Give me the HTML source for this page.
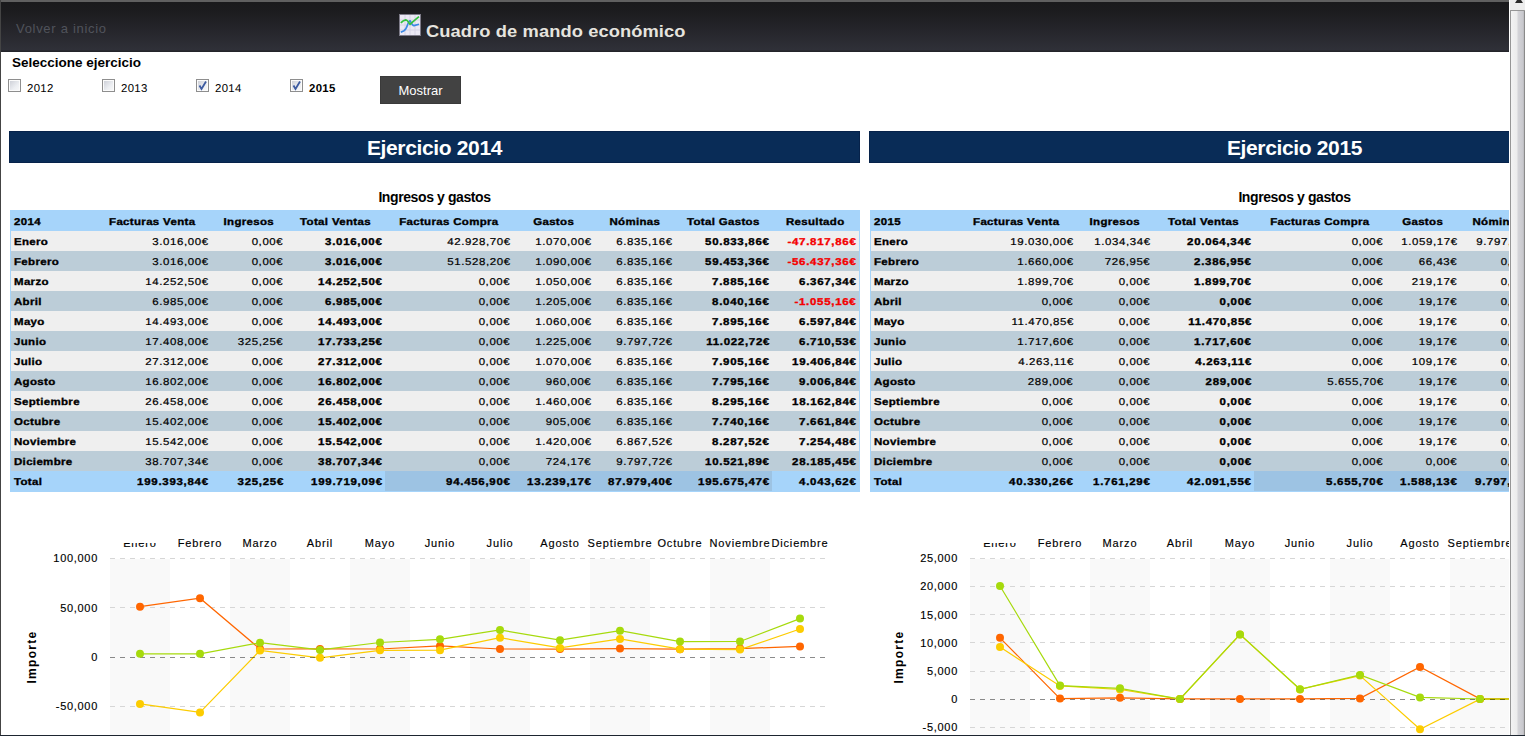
<!DOCTYPE html>
<html><head><meta charset="utf-8"><style>
*{margin:0;padding:0;box-sizing:border-box}
html,body{width:1525px;height:736px;overflow:hidden;background:#fff;font-family:"Liberation Sans", sans-serif;}
#page{position:absolute;left:0;top:0;width:1509px;height:736px;overflow:hidden;background:#fff}
.frameT{position:absolute;left:0;top:0;width:1509px;height:2px;background:#606060}
.frameL{position:absolute;left:0;top:0;width:1px;height:736px;background:#444}
.frameB{position:absolute;left:0;top:735px;width:1525px;height:1px;background:#1d2530}
#hdr{position:absolute;left:1px;top:2px;width:1508px;height:50px;background:linear-gradient(#1a1a1c 0%,#1c1c1f 20%,#2f3038 96%,#23242a 98%)}
.volver{position:absolute;left:15px;top:19px;font-size:13px;line-height:16px;color:#50535b;letter-spacing:0.7px;white-space:nowrap}
.title{position:absolute;left:425px;top:20px;font-size:17px;line-height:20px;font-weight:bold;color:#e6e4df;letter-spacing:0.1px;white-space:nowrap;transform:scaleX(1.075);transform-origin:0 50%}
.sel{position:absolute;left:12px;top:55px;font-size:13.5px;line-height:16px;font-weight:bold;color:#000;white-space:nowrap}
.cb{position:absolute;top:79px;width:13px;height:13px;border:1px solid #8e8e8e;box-shadow:inset 0 0 0 1px #fbfbfb;background:linear-gradient(135deg,#c9ccd4,#eceef2 60%,#fafafa)}
.cbl{position:absolute;top:82px;font-size:11.4px;line-height:15px;color:#000;white-space:nowrap;letter-spacing:0.3px;text-rendering:geometricPrecision}
.btn{position:absolute;left:380px;top:76px;width:81px;height:28px;background:#424242;border:1px solid #3a3a3a;color:#fff;font-size:13px;line-height:28px;text-align:center}
.bar{position:absolute;top:131px;height:32px;background:#092c57;border:1px solid #06224a;color:#fff;font-weight:bold;font-size:21px;line-height:32px;text-align:center;letter-spacing:-0.35px}
.igt{position:absolute;top:188px;font-size:14px;line-height:18px;font-weight:bold;text-align:center;letter-spacing:-0.4px}
.tbl{position:absolute;height:282px;background:#a6d4fa}
.tr{position:absolute;left:1px;right:1px;height:20px}
.tr.hd{top:0;left:1px;height:21px}
.tr.hd .td{top:3px}
.tr .td{position:absolute;top:0;height:20px;line-height:20px;font-size:9.9px;white-space:nowrap;overflow:hidden;color:#000;text-rendering:geometricPrecision}
.tr:not(.hd){margin-top:1px}
.tr:not(.hd) .td{padding-top:2px}
.odd{background:#efefef}
.even{background:#bccdd8}
.tot{background:#a6d4fa}
.td span{display:inline-block;transform:scaleX(1.16)}
.c0{padding-left:2.5px;font-weight:bold;letter-spacing:0.3px}
.c0 span{transform-origin:0 50%}
.ch{text-align:center;font-weight:bold;letter-spacing:0.3px}
.ch span{transform-origin:50% 50%}
.cn{text-align:right;padding-right:2.4px;letter-spacing:0.52px}
.cn span{transform-origin:100% 50%}
.b{font-weight:bold}
.tr .td{-webkit-text-stroke:0.2px currentColor}
.tr .td.b,.tr .td.c0,.tr .td.ch{-webkit-text-stroke:0.35px currentColor}
.cn.b{letter-spacing:0.62px}
.tr .td.red{color:#f40000}
.yl{position:absolute;width:100px;text-align:right;font-size:11px;line-height:14px;color:#000;-webkit-text-stroke:0.15px #000;letter-spacing:0.7px;white-space:nowrap}
.ml{position:absolute;top:536px;width:100px;text-align:center;font-size:11px;line-height:14px;color:#000;-webkit-text-stroke:0.15px #000;letter-spacing:0.85px;white-space:nowrap}
.imp{position:absolute;font-size:12px;line-height:14px;font-weight:bold;white-space:nowrap;transform:translate(-50%,-50%) rotate(-90deg);letter-spacing:1.3px}
#sb{position:absolute;left:1509px;top:0;width:16px;height:735px;background:#fff}
#sbt{position:absolute;left:1px;top:0;width:15px;height:735px;background:#ededed}
#sba{position:absolute;left:6px;top:-3px;width:0;height:0;border-left:4px solid transparent;border-right:4px solid transparent;border-bottom:6px solid #2a2a2a}
#sbh{position:absolute;left:1px;top:10px;width:15px;height:740px;border:1px solid #969696;border-right-color:#8a8a8a;border-radius:1px;background:linear-gradient(90deg,#f3f3f3 0%,#ececec 45%,#d4d4d8 55%,#c9c9ce 90%,#b9b9bd 100%)}
</style></head><body>
<div id="page">
<div id="hdr"><div class="volver">Volver a inicio</div><svg style="position:absolute;left:398px;top:12px" width="22" height="22" viewBox="0 0 22 22"><rect x="0.5" y="0.5" width="21" height="21" fill="#ebe9f4" stroke="#7d7b88" stroke-width="1"/><path d="M6 1V21M11 1V21M16 1V21M1 6H21M1 11H21M1 16H21" stroke="#d6d3e6" stroke-width="1"/><path d="M1.8 18.3 L5 16.8 Q7 15.6 8.5 11 Q10 6.5 11.2 6.8 Q13.5 11.5 15 11.6 L20 10.3" fill="none" stroke="#3a88e4" stroke-width="1.7" stroke-linejoin="round"/><path d="M1.8 8.9 Q4.5 6 6.8 5.8 Q8.5 6 11 10.4 Q14 7.5 20 2.6" fill="none" stroke="#33c13c" stroke-width="1.7" stroke-linejoin="round"/></svg><div class="title">Cuadro de mando económico</div></div>
<div class="sel">Seleccione ejercicio</div>
<div class="cb" style="left:8px"></div>
<div class="cbl" style="left:27px;">2012</div>
<div class="cb" style="left:102px"></div>
<div class="cbl" style="left:121px;">2013</div>
<div class="cb" style="left:196px"><svg width="11" height="11" style="position:absolute;left:0;top:0"><path d="M2.5 5.5 L4.5 9 L9 1.5" fill="none" stroke="#3c5aa0" stroke-width="1.8"/></svg></div>
<div class="cbl" style="left:215px;">2014</div>
<div class="cb" style="left:290px"><svg width="11" height="11" style="position:absolute;left:0;top:0"><path d="M2.5 5.5 L4.5 9 L9 1.5" fill="none" stroke="#3c5aa0" stroke-width="1.8"/></svg></div>
<div class="cbl" style="left:309px;font-weight:bold;">2015</div>
<div class="btn">Mostrar</div>
<div class="bar" style="left:9px;width:851px">Ejercicio 2014</div>
<div class="bar" style="left:869px;width:851px">Ejercicio 2015</div>
<div class="igt" style="left:9px;width:851px">Ingresos y gastos</div>
<div class="igt" style="left:869px;width:851px">Ingresos y gastos</div>
<div class="tbl" style="left:10px;top:210px;width:850px">
<div class="tr hd" style="top:0">
<div class="td c0" style="left:0px;width:83px"><span>2014</span></div>
<div class="td ch" style="left:83px;width:117px"><span>Facturas Venta</span></div>
<div class="td ch" style="left:200px;width:75px"><span>Ingresos</span></div>
<div class="td ch" style="left:275px;width:99px"><span>Total Ventas</span></div>
<div class="td ch" style="left:374px;width:128px"><span>Facturas Compra</span></div>
<div class="td ch" style="left:502px;width:81px"><span>Gastos</span></div>
<div class="td ch" style="left:583px;width:81px"><span>Nóminas</span></div>
<div class="td ch" style="left:664px;width:97px"><span>Total Gastos</span></div>
<div class="td ch" style="left:761px;width:87px"><span>Resultado</span></div>
</div>
<div class="tr odd" style="top:20px">
<div class="td c0" style="left:0px;width:83px;"><span>Enero</span></div>
<div class="td cn" style="left:83px;width:117px;"><span>3.016,00€</span></div>
<div class="td cn" style="left:200px;width:75px;"><span>0,00€</span></div>
<div class="td cn b" style="left:275px;width:99px;"><span>3.016,00€</span></div>
<div class="td cn" style="left:374px;width:128px;"><span>42.928,70€</span></div>
<div class="td cn" style="left:502px;width:81px;"><span>1.070,00€</span></div>
<div class="td cn" style="left:583px;width:81px;"><span>6.835,16€</span></div>
<div class="td cn b" style="left:664px;width:97px;"><span>50.833,86€</span></div>
<div class="td cn b red" style="left:761px;width:87px;"><span>-47.817,86€</span></div>
</div>
<div class="tr even" style="top:40px">
<div class="td c0" style="left:0px;width:83px;"><span>Febrero</span></div>
<div class="td cn" style="left:83px;width:117px;"><span>3.016,00€</span></div>
<div class="td cn" style="left:200px;width:75px;"><span>0,00€</span></div>
<div class="td cn b" style="left:275px;width:99px;"><span>3.016,00€</span></div>
<div class="td cn" style="left:374px;width:128px;"><span>51.528,20€</span></div>
<div class="td cn" style="left:502px;width:81px;"><span>1.090,00€</span></div>
<div class="td cn" style="left:583px;width:81px;"><span>6.835,16€</span></div>
<div class="td cn b" style="left:664px;width:97px;"><span>59.453,36€</span></div>
<div class="td cn b red" style="left:761px;width:87px;"><span>-56.437,36€</span></div>
</div>
<div class="tr odd" style="top:60px">
<div class="td c0" style="left:0px;width:83px;"><span>Marzo</span></div>
<div class="td cn" style="left:83px;width:117px;"><span>14.252,50€</span></div>
<div class="td cn" style="left:200px;width:75px;"><span>0,00€</span></div>
<div class="td cn b" style="left:275px;width:99px;"><span>14.252,50€</span></div>
<div class="td cn" style="left:374px;width:128px;"><span>0,00€</span></div>
<div class="td cn" style="left:502px;width:81px;"><span>1.050,00€</span></div>
<div class="td cn" style="left:583px;width:81px;"><span>6.835,16€</span></div>
<div class="td cn b" style="left:664px;width:97px;"><span>7.885,16€</span></div>
<div class="td cn b" style="left:761px;width:87px;"><span>6.367,34€</span></div>
</div>
<div class="tr even" style="top:80px">
<div class="td c0" style="left:0px;width:83px;"><span>Abril</span></div>
<div class="td cn" style="left:83px;width:117px;"><span>6.985,00€</span></div>
<div class="td cn" style="left:200px;width:75px;"><span>0,00€</span></div>
<div class="td cn b" style="left:275px;width:99px;"><span>6.985,00€</span></div>
<div class="td cn" style="left:374px;width:128px;"><span>0,00€</span></div>
<div class="td cn" style="left:502px;width:81px;"><span>1.205,00€</span></div>
<div class="td cn" style="left:583px;width:81px;"><span>6.835,16€</span></div>
<div class="td cn b" style="left:664px;width:97px;"><span>8.040,16€</span></div>
<div class="td cn b red" style="left:761px;width:87px;"><span>-1.055,16€</span></div>
</div>
<div class="tr odd" style="top:100px">
<div class="td c0" style="left:0px;width:83px;"><span>Mayo</span></div>
<div class="td cn" style="left:83px;width:117px;"><span>14.493,00€</span></div>
<div class="td cn" style="left:200px;width:75px;"><span>0,00€</span></div>
<div class="td cn b" style="left:275px;width:99px;"><span>14.493,00€</span></div>
<div class="td cn" style="left:374px;width:128px;"><span>0,00€</span></div>
<div class="td cn" style="left:502px;width:81px;"><span>1.060,00€</span></div>
<div class="td cn" style="left:583px;width:81px;"><span>6.835,16€</span></div>
<div class="td cn b" style="left:664px;width:97px;"><span>7.895,16€</span></div>
<div class="td cn b" style="left:761px;width:87px;"><span>6.597,84€</span></div>
</div>
<div class="tr even" style="top:120px">
<div class="td c0" style="left:0px;width:83px;"><span>Junio</span></div>
<div class="td cn" style="left:83px;width:117px;"><span>17.408,00€</span></div>
<div class="td cn" style="left:200px;width:75px;"><span>325,25€</span></div>
<div class="td cn b" style="left:275px;width:99px;"><span>17.733,25€</span></div>
<div class="td cn" style="left:374px;width:128px;"><span>0,00€</span></div>
<div class="td cn" style="left:502px;width:81px;"><span>1.225,00€</span></div>
<div class="td cn" style="left:583px;width:81px;"><span>9.797,72€</span></div>
<div class="td cn b" style="left:664px;width:97px;"><span>11.022,72€</span></div>
<div class="td cn b" style="left:761px;width:87px;"><span>6.710,53€</span></div>
</div>
<div class="tr odd" style="top:140px">
<div class="td c0" style="left:0px;width:83px;"><span>Julio</span></div>
<div class="td cn" style="left:83px;width:117px;"><span>27.312,00€</span></div>
<div class="td cn" style="left:200px;width:75px;"><span>0,00€</span></div>
<div class="td cn b" style="left:275px;width:99px;"><span>27.312,00€</span></div>
<div class="td cn" style="left:374px;width:128px;"><span>0,00€</span></div>
<div class="td cn" style="left:502px;width:81px;"><span>1.070,00€</span></div>
<div class="td cn" style="left:583px;width:81px;"><span>6.835,16€</span></div>
<div class="td cn b" style="left:664px;width:97px;"><span>7.905,16€</span></div>
<div class="td cn b" style="left:761px;width:87px;"><span>19.406,84€</span></div>
</div>
<div class="tr even" style="top:160px">
<div class="td c0" style="left:0px;width:83px;"><span>Agosto</span></div>
<div class="td cn" style="left:83px;width:117px;"><span>16.802,00€</span></div>
<div class="td cn" style="left:200px;width:75px;"><span>0,00€</span></div>
<div class="td cn b" style="left:275px;width:99px;"><span>16.802,00€</span></div>
<div class="td cn" style="left:374px;width:128px;"><span>0,00€</span></div>
<div class="td cn" style="left:502px;width:81px;"><span>960,00€</span></div>
<div class="td cn" style="left:583px;width:81px;"><span>6.835,16€</span></div>
<div class="td cn b" style="left:664px;width:97px;"><span>7.795,16€</span></div>
<div class="td cn b" style="left:761px;width:87px;"><span>9.006,84€</span></div>
</div>
<div class="tr odd" style="top:180px">
<div class="td c0" style="left:0px;width:83px;"><span>Septiembre</span></div>
<div class="td cn" style="left:83px;width:117px;"><span>26.458,00€</span></div>
<div class="td cn" style="left:200px;width:75px;"><span>0,00€</span></div>
<div class="td cn b" style="left:275px;width:99px;"><span>26.458,00€</span></div>
<div class="td cn" style="left:374px;width:128px;"><span>0,00€</span></div>
<div class="td cn" style="left:502px;width:81px;"><span>1.460,00€</span></div>
<div class="td cn" style="left:583px;width:81px;"><span>6.835,16€</span></div>
<div class="td cn b" style="left:664px;width:97px;"><span>8.295,16€</span></div>
<div class="td cn b" style="left:761px;width:87px;"><span>18.162,84€</span></div>
</div>
<div class="tr even" style="top:200px">
<div class="td c0" style="left:0px;width:83px;"><span>Octubre</span></div>
<div class="td cn" style="left:83px;width:117px;"><span>15.402,00€</span></div>
<div class="td cn" style="left:200px;width:75px;"><span>0,00€</span></div>
<div class="td cn b" style="left:275px;width:99px;"><span>15.402,00€</span></div>
<div class="td cn" style="left:374px;width:128px;"><span>0,00€</span></div>
<div class="td cn" style="left:502px;width:81px;"><span>905,00€</span></div>
<div class="td cn" style="left:583px;width:81px;"><span>6.835,16€</span></div>
<div class="td cn b" style="left:664px;width:97px;"><span>7.740,16€</span></div>
<div class="td cn b" style="left:761px;width:87px;"><span>7.661,84€</span></div>
</div>
<div class="tr odd" style="top:220px">
<div class="td c0" style="left:0px;width:83px;"><span>Noviembre</span></div>
<div class="td cn" style="left:83px;width:117px;"><span>15.542,00€</span></div>
<div class="td cn" style="left:200px;width:75px;"><span>0,00€</span></div>
<div class="td cn b" style="left:275px;width:99px;"><span>15.542,00€</span></div>
<div class="td cn" style="left:374px;width:128px;"><span>0,00€</span></div>
<div class="td cn" style="left:502px;width:81px;"><span>1.420,00€</span></div>
<div class="td cn" style="left:583px;width:81px;"><span>6.867,52€</span></div>
<div class="td cn b" style="left:664px;width:97px;"><span>8.287,52€</span></div>
<div class="td cn b" style="left:761px;width:87px;"><span>7.254,48€</span></div>
</div>
<div class="tr even" style="top:240px">
<div class="td c0" style="left:0px;width:83px;"><span>Diciembre</span></div>
<div class="td cn" style="left:83px;width:117px;"><span>38.707,34€</span></div>
<div class="td cn" style="left:200px;width:75px;"><span>0,00€</span></div>
<div class="td cn b" style="left:275px;width:99px;"><span>38.707,34€</span></div>
<div class="td cn" style="left:374px;width:128px;"><span>0,00€</span></div>
<div class="td cn" style="left:502px;width:81px;"><span>724,17€</span></div>
<div class="td cn" style="left:583px;width:81px;"><span>9.797,72€</span></div>
<div class="td cn b" style="left:664px;width:97px;"><span>10.521,89€</span></div>
<div class="td cn b" style="left:761px;width:87px;"><span>28.185,45€</span></div>
</div>
<div class="tr tot" style="top:260px">
<div class="td c0 b" style="left:0px;width:83px;"><span>Total</span></div>
<div class="td cn b" style="left:83px;width:117px;"><span>199.393,84€</span></div>
<div class="td cn b" style="left:200px;width:75px;"><span>325,25€</span></div>
<div class="td cn b" style="left:275px;width:99px;"><span>199.719,09€</span></div>
<div class="td cn b" style="left:374px;width:128px;background:#9dc3e3;"><span>94.456,90€</span></div>
<div class="td cn b" style="left:502px;width:81px;background:#9dc3e3;"><span>13.239,17€</span></div>
<div class="td cn b" style="left:583px;width:81px;background:#9dc3e3;"><span>87.979,40€</span></div>
<div class="td cn b" style="left:664px;width:97px;background:#9dc3e3;"><span>195.675,47€</span></div>
<div class="td cn b" style="left:761px;width:87px;"><span>4.043,62€</span></div>
</div>
</div>
<div class="tbl" style="left:870px;top:210px;width:850px">
<div class="tr hd" style="top:0">
<div class="td c0" style="left:0px;width:85px"><span>2015</span></div>
<div class="td ch" style="left:85px;width:120px"><span>Facturas Venta</span></div>
<div class="td ch" style="left:205px;width:77px"><span>Ingresos</span></div>
<div class="td ch" style="left:282px;width:101px"><span>Total Ventas</span></div>
<div class="td ch" style="left:383px;width:132px"><span>Facturas Compra</span></div>
<div class="td ch" style="left:515px;width:74px"><span>Gastos</span></div>
<div class="td ch" style="left:589px;width:75px"><span>Nóminas</span></div>
<div class="td ch" style="left:664px;width:92px"><span>Total Gastos</span></div>
<div class="td ch" style="left:756px;width:92px"><span>Resultado</span></div>
</div>
<div class="tr odd" style="top:20px">
<div class="td c0" style="left:0px;width:85px;"><span>Enero</span></div>
<div class="td cn" style="left:85px;width:120px;"><span>19.030,00€</span></div>
<div class="td cn" style="left:205px;width:77px;"><span>1.034,34€</span></div>
<div class="td cn b" style="left:282px;width:101px;"><span>20.064,34€</span></div>
<div class="td cn" style="left:383px;width:132px;"><span>0,00€</span></div>
<div class="td cn" style="left:515px;width:74px;"><span>1.059,17€</span></div>
<div class="td cn" style="left:589px;width:75px;"><span>9.797,72€</span></div>
<div class="td cn b" style="left:664px;width:92px;"><span>10.856,89€</span></div>
<div class="td cn b" style="left:756px;width:92px;"><span>9.207,45€</span></div>
</div>
<div class="tr even" style="top:40px">
<div class="td c0" style="left:0px;width:85px;"><span>Febrero</span></div>
<div class="td cn" style="left:85px;width:120px;"><span>1.660,00€</span></div>
<div class="td cn" style="left:205px;width:77px;"><span>726,95€</span></div>
<div class="td cn b" style="left:282px;width:101px;"><span>2.386,95€</span></div>
<div class="td cn" style="left:383px;width:132px;"><span>0,00€</span></div>
<div class="td cn" style="left:515px;width:74px;"><span>66,43€</span></div>
<div class="td cn" style="left:589px;width:75px;"><span>0,00€</span></div>
<div class="td cn b" style="left:664px;width:92px;"><span>66,43€</span></div>
<div class="td cn b" style="left:756px;width:92px;"><span>2.320,52€</span></div>
</div>
<div class="tr odd" style="top:60px">
<div class="td c0" style="left:0px;width:85px;"><span>Marzo</span></div>
<div class="td cn" style="left:85px;width:120px;"><span>1.899,70€</span></div>
<div class="td cn" style="left:205px;width:77px;"><span>0,00€</span></div>
<div class="td cn b" style="left:282px;width:101px;"><span>1.899,70€</span></div>
<div class="td cn" style="left:383px;width:132px;"><span>0,00€</span></div>
<div class="td cn" style="left:515px;width:74px;"><span>219,17€</span></div>
<div class="td cn" style="left:589px;width:75px;"><span>0,00€</span></div>
<div class="td cn b" style="left:664px;width:92px;"><span>219,17€</span></div>
<div class="td cn b" style="left:756px;width:92px;"><span>1.680,53€</span></div>
</div>
<div class="tr even" style="top:80px">
<div class="td c0" style="left:0px;width:85px;"><span>Abril</span></div>
<div class="td cn" style="left:85px;width:120px;"><span>0,00€</span></div>
<div class="td cn" style="left:205px;width:77px;"><span>0,00€</span></div>
<div class="td cn b" style="left:282px;width:101px;"><span>0,00€</span></div>
<div class="td cn" style="left:383px;width:132px;"><span>0,00€</span></div>
<div class="td cn" style="left:515px;width:74px;"><span>19,17€</span></div>
<div class="td cn" style="left:589px;width:75px;"><span>0,00€</span></div>
<div class="td cn b" style="left:664px;width:92px;"><span>19,17€</span></div>
<div class="td cn b red" style="left:756px;width:92px;"><span>-19,17€</span></div>
</div>
<div class="tr odd" style="top:100px">
<div class="td c0" style="left:0px;width:85px;"><span>Mayo</span></div>
<div class="td cn" style="left:85px;width:120px;"><span>11.470,85€</span></div>
<div class="td cn" style="left:205px;width:77px;"><span>0,00€</span></div>
<div class="td cn b" style="left:282px;width:101px;"><span>11.470,85€</span></div>
<div class="td cn" style="left:383px;width:132px;"><span>0,00€</span></div>
<div class="td cn" style="left:515px;width:74px;"><span>19,17€</span></div>
<div class="td cn" style="left:589px;width:75px;"><span>0,00€</span></div>
<div class="td cn b" style="left:664px;width:92px;"><span>19,17€</span></div>
<div class="td cn b" style="left:756px;width:92px;"><span>11.451,68€</span></div>
</div>
<div class="tr even" style="top:120px">
<div class="td c0" style="left:0px;width:85px;"><span>Junio</span></div>
<div class="td cn" style="left:85px;width:120px;"><span>1.717,60€</span></div>
<div class="td cn" style="left:205px;width:77px;"><span>0,00€</span></div>
<div class="td cn b" style="left:282px;width:101px;"><span>1.717,60€</span></div>
<div class="td cn" style="left:383px;width:132px;"><span>0,00€</span></div>
<div class="td cn" style="left:515px;width:74px;"><span>19,17€</span></div>
<div class="td cn" style="left:589px;width:75px;"><span>0,00€</span></div>
<div class="td cn b" style="left:664px;width:92px;"><span>19,17€</span></div>
<div class="td cn b" style="left:756px;width:92px;"><span>1.698,43€</span></div>
</div>
<div class="tr odd" style="top:140px">
<div class="td c0" style="left:0px;width:85px;"><span>Julio</span></div>
<div class="td cn" style="left:85px;width:120px;"><span>4.263,11€</span></div>
<div class="td cn" style="left:205px;width:77px;"><span>0,00€</span></div>
<div class="td cn b" style="left:282px;width:101px;"><span>4.263,11€</span></div>
<div class="td cn" style="left:383px;width:132px;"><span>0,00€</span></div>
<div class="td cn" style="left:515px;width:74px;"><span>109,17€</span></div>
<div class="td cn" style="left:589px;width:75px;"><span>0,00€</span></div>
<div class="td cn b" style="left:664px;width:92px;"><span>109,17€</span></div>
<div class="td cn b" style="left:756px;width:92px;"><span>4.153,94€</span></div>
</div>
<div class="tr even" style="top:160px">
<div class="td c0" style="left:0px;width:85px;"><span>Agosto</span></div>
<div class="td cn" style="left:85px;width:120px;"><span>289,00€</span></div>
<div class="td cn" style="left:205px;width:77px;"><span>0,00€</span></div>
<div class="td cn b" style="left:282px;width:101px;"><span>289,00€</span></div>
<div class="td cn" style="left:383px;width:132px;"><span>5.655,70€</span></div>
<div class="td cn" style="left:515px;width:74px;"><span>19,17€</span></div>
<div class="td cn" style="left:589px;width:75px;"><span>0,00€</span></div>
<div class="td cn b" style="left:664px;width:92px;"><span>5.674,87€</span></div>
<div class="td cn b red" style="left:756px;width:92px;"><span>-5.385,87€</span></div>
</div>
<div class="tr odd" style="top:180px">
<div class="td c0" style="left:0px;width:85px;"><span>Septiembre</span></div>
<div class="td cn" style="left:85px;width:120px;"><span>0,00€</span></div>
<div class="td cn" style="left:205px;width:77px;"><span>0,00€</span></div>
<div class="td cn b" style="left:282px;width:101px;"><span>0,00€</span></div>
<div class="td cn" style="left:383px;width:132px;"><span>0,00€</span></div>
<div class="td cn" style="left:515px;width:74px;"><span>19,17€</span></div>
<div class="td cn" style="left:589px;width:75px;"><span>0,00€</span></div>
<div class="td cn b" style="left:664px;width:92px;"><span>19,17€</span></div>
<div class="td cn b red" style="left:756px;width:92px;"><span>-19,17€</span></div>
</div>
<div class="tr even" style="top:200px">
<div class="td c0" style="left:0px;width:85px;"><span>Octubre</span></div>
<div class="td cn" style="left:85px;width:120px;"><span>0,00€</span></div>
<div class="td cn" style="left:205px;width:77px;"><span>0,00€</span></div>
<div class="td cn b" style="left:282px;width:101px;"><span>0,00€</span></div>
<div class="td cn" style="left:383px;width:132px;"><span>0,00€</span></div>
<div class="td cn" style="left:515px;width:74px;"><span>19,17€</span></div>
<div class="td cn" style="left:589px;width:75px;"><span>0,00€</span></div>
<div class="td cn b" style="left:664px;width:92px;"><span>19,17€</span></div>
<div class="td cn b red" style="left:756px;width:92px;"><span>-19,17€</span></div>
</div>
<div class="tr odd" style="top:220px">
<div class="td c0" style="left:0px;width:85px;"><span>Noviembre</span></div>
<div class="td cn" style="left:85px;width:120px;"><span>0,00€</span></div>
<div class="td cn" style="left:205px;width:77px;"><span>0,00€</span></div>
<div class="td cn b" style="left:282px;width:101px;"><span>0,00€</span></div>
<div class="td cn" style="left:383px;width:132px;"><span>0,00€</span></div>
<div class="td cn" style="left:515px;width:74px;"><span>19,17€</span></div>
<div class="td cn" style="left:589px;width:75px;"><span>0,00€</span></div>
<div class="td cn b" style="left:664px;width:92px;"><span>19,17€</span></div>
<div class="td cn b red" style="left:756px;width:92px;"><span>-19,17€</span></div>
</div>
<div class="tr even" style="top:240px">
<div class="td c0" style="left:0px;width:85px;"><span>Diciembre</span></div>
<div class="td cn" style="left:85px;width:120px;"><span>0,00€</span></div>
<div class="td cn" style="left:205px;width:77px;"><span>0,00€</span></div>
<div class="td cn b" style="left:282px;width:101px;"><span>0,00€</span></div>
<div class="td cn" style="left:383px;width:132px;"><span>0,00€</span></div>
<div class="td cn" style="left:515px;width:74px;"><span>0,00€</span></div>
<div class="td cn" style="left:589px;width:75px;"><span>0,00€</span></div>
<div class="td cn b" style="left:664px;width:92px;"><span>0,00€</span></div>
<div class="td cn b" style="left:756px;width:92px;"><span>0,00€</span></div>
</div>
<div class="tr tot" style="top:260px">
<div class="td c0 b" style="left:0px;width:85px;"><span>Total</span></div>
<div class="td cn b" style="left:85px;width:120px;"><span>40.330,26€</span></div>
<div class="td cn b" style="left:205px;width:77px;"><span>1.761,29€</span></div>
<div class="td cn b" style="left:282px;width:101px;"><span>42.091,55€</span></div>
<div class="td cn b" style="left:383px;width:132px;background:#9dc3e3;"><span>5.655,70€</span></div>
<div class="td cn b" style="left:515px;width:74px;background:#9dc3e3;"><span>1.588,13€</span></div>
<div class="td cn b" style="left:589px;width:75px;background:#9dc3e3;"><span>9.797,72€</span></div>
<div class="td cn b" style="left:664px;width:92px;background:#9dc3e3;"><span>15.041,55€</span></div>
<div class="td cn b" style="left:756px;width:92px;"><span>27.050,00€</span></div>
</div>
</div>
<svg class="ch" width="1525" height="736" style="position:absolute;left:0;top:0">
<defs><clipPath id="cp110"><rect x="110" y="559" width="720" height="200"/></clipPath></defs>
<rect x="110" y="559" width="60" height="200" fill="#f9f9f9"/>
<rect x="230" y="559" width="60" height="200" fill="#f9f9f9"/>
<rect x="350" y="559" width="60" height="200" fill="#f9f9f9"/>
<rect x="470" y="559" width="60" height="200" fill="#f9f9f9"/>
<rect x="590" y="559" width="60" height="200" fill="#f9f9f9"/>
<rect x="710" y="559" width="60" height="200" fill="#f9f9f9"/>
<line x1="110" y1="558.5" x2="830" y2="558.5" stroke="#d6d6d6" stroke-width="1" stroke-dasharray="5,5"/>
<line x1="110" y1="607.5" x2="830" y2="607.5" stroke="#d6d6d6" stroke-width="1" stroke-dasharray="5,5"/>
<line x1="110" y1="706.5" x2="830" y2="706.5" stroke="#d6d6d6" stroke-width="1" stroke-dasharray="5,5"/>
<line x1="110" y1="755.5" x2="830" y2="755.5" stroke="#d6d6d6" stroke-width="1" stroke-dasharray="5,5"/>
<polyline points="140.0,606.7 200.0,598.2 260.0,649.0 320.0,648.9 380.0,649.0 440.0,645.9 500.0,649.0 560.0,649.1 620.0,648.6 680.0,649.2 740.0,648.6 800.0,646.4" fill="none" stroke="#ff6600" stroke-width="1.2"/>
<polyline points="140.0,703.9 200.0,712.4 260.0,650.5 320.0,657.8 380.0,650.3 440.0,650.2 500.0,637.7 560.0,647.9 620.0,638.9 680.0,649.2 740.0,649.6 800.0,629.0" fill="none" stroke="#fccc00" stroke-width="1.2"/>
<polyline points="140.0,653.8 200.0,653.8 260.0,642.7 320.0,649.9 380.0,642.5 440.0,639.3 500.0,629.9 560.0,640.2 620.0,630.7 680.0,641.6 740.0,641.5 800.0,618.6" fill="none" stroke="#a6da0c" stroke-width="1.2"/>
<line x1="110" y1="657.5" x2="830" y2="657.5" stroke="rgba(0,0,0,0.45)" stroke-width="1" stroke-dasharray="5,5"/>
<circle cx="140.0" cy="606.7" r="4" fill="#ff6600"/>
<circle cx="200.0" cy="598.2" r="4" fill="#ff6600"/>
<circle cx="260.0" cy="649.0" r="4" fill="#ff6600"/>
<circle cx="320.0" cy="648.9" r="4" fill="#ff6600"/>
<circle cx="380.0" cy="649.0" r="4" fill="#ff6600"/>
<circle cx="440.0" cy="645.9" r="4" fill="#ff6600"/>
<circle cx="500.0" cy="649.0" r="4" fill="#ff6600"/>
<circle cx="560.0" cy="649.1" r="4" fill="#ff6600"/>
<circle cx="620.0" cy="648.6" r="4" fill="#ff6600"/>
<circle cx="680.0" cy="649.2" r="4" fill="#ff6600"/>
<circle cx="740.0" cy="648.6" r="4" fill="#ff6600"/>
<circle cx="800.0" cy="646.4" r="4" fill="#ff6600"/>
<circle cx="140.0" cy="703.9" r="4" fill="#fccc00"/>
<circle cx="200.0" cy="712.4" r="4" fill="#fccc00"/>
<circle cx="260.0" cy="650.5" r="4" fill="#fccc00"/>
<circle cx="320.0" cy="657.8" r="4" fill="#fccc00"/>
<circle cx="380.0" cy="650.3" r="4" fill="#fccc00"/>
<circle cx="440.0" cy="650.2" r="4" fill="#fccc00"/>
<circle cx="500.0" cy="637.7" r="4" fill="#fccc00"/>
<circle cx="560.0" cy="647.9" r="4" fill="#fccc00"/>
<circle cx="620.0" cy="638.9" r="4" fill="#fccc00"/>
<circle cx="680.0" cy="649.2" r="4" fill="#fccc00"/>
<circle cx="740.0" cy="649.6" r="4" fill="#fccc00"/>
<circle cx="800.0" cy="629.0" r="4" fill="#fccc00"/>
<circle cx="140.0" cy="653.8" r="4" fill="#a6da0c"/>
<circle cx="200.0" cy="653.8" r="4" fill="#a6da0c"/>
<circle cx="260.0" cy="642.7" r="4" fill="#a6da0c"/>
<circle cx="320.0" cy="649.9" r="4" fill="#a6da0c"/>
<circle cx="380.0" cy="642.5" r="4" fill="#a6da0c"/>
<circle cx="440.0" cy="639.3" r="4" fill="#a6da0c"/>
<circle cx="500.0" cy="629.9" r="4" fill="#a6da0c"/>
<circle cx="560.0" cy="640.2" r="4" fill="#a6da0c"/>
<circle cx="620.0" cy="630.7" r="4" fill="#a6da0c"/>
<circle cx="680.0" cy="641.6" r="4" fill="#a6da0c"/>
<circle cx="740.0" cy="641.5" r="4" fill="#a6da0c"/>
<circle cx="800.0" cy="618.6" r="4" fill="#a6da0c"/>
</svg>
<div class="yl" style="left:-2px;top:551.2px">100,000</div>
<div class="yl" style="left:-2px;top:600.5px">50,000</div>
<div class="yl" style="left:-2px;top:649.8px">0</div>
<div class="yl" style="left:-2px;top:699.1px">-50,000</div>
<div class="yl" style="left:-2px;top:748.4px">-100,000</div>
<div class="ml" style="left:90px">Enero</div>
<div class="ml" style="left:150px">Febrero</div>
<div class="ml" style="left:210px">Marzo</div>
<div class="ml" style="left:270px">Abril</div>
<div class="ml" style="left:330px">Mayo</div>
<div class="ml" style="left:390px">Junio</div>
<div class="ml" style="left:450px">Julio</div>
<div class="ml" style="left:510px">Agosto</div>
<div class="ml" style="left:570px">Septiembre</div>
<div class="ml" style="left:630px">Octubre</div>
<div class="ml" style="left:690px">Noviembre</div>
<div class="ml" style="left:750px">Diciembre</div>
<div class="imp" style="left:32px;top:657px">Importe</div>
<svg class="ch" width="1525" height="736" style="position:absolute;left:0;top:0">
<defs><clipPath id="cp970"><rect x="970" y="559" width="720" height="200"/></clipPath></defs>
<rect x="970" y="559" width="60" height="200" fill="#f9f9f9"/>
<rect x="1090" y="559" width="60" height="200" fill="#f9f9f9"/>
<rect x="1210" y="559" width="60" height="200" fill="#f9f9f9"/>
<rect x="1330" y="559" width="60" height="200" fill="#f9f9f9"/>
<rect x="1450" y="559" width="60" height="200" fill="#f9f9f9"/>
<rect x="1570" y="559" width="60" height="200" fill="#f9f9f9"/>
<line x1="970" y1="558.5" x2="1690" y2="558.5" stroke="#d6d6d6" stroke-width="1" stroke-dasharray="5,5"/>
<line x1="970" y1="586.5" x2="1690" y2="586.5" stroke="#d6d6d6" stroke-width="1" stroke-dasharray="5,5"/>
<line x1="970" y1="614.5" x2="1690" y2="614.5" stroke="#d6d6d6" stroke-width="1" stroke-dasharray="5,5"/>
<line x1="970" y1="642.5" x2="1690" y2="642.5" stroke="#d6d6d6" stroke-width="1" stroke-dasharray="5,5"/>
<line x1="970" y1="671.5" x2="1690" y2="671.5" stroke="#d6d6d6" stroke-width="1" stroke-dasharray="5,5"/>
<line x1="970" y1="727.5" x2="1690" y2="727.5" stroke="#d6d6d6" stroke-width="1" stroke-dasharray="5,5"/>
<line x1="970" y1="755.5" x2="1690" y2="755.5" stroke="#d6d6d6" stroke-width="1" stroke-dasharray="5,5"/>
<polyline points="1000.0,637.8 1060.0,698.6 1120.0,697.8 1180.0,698.9 1240.0,698.9 1300.0,698.9 1360.0,698.4 1420.0,667.0 1480.0,698.9 1540.0,698.9 1600.0,698.9 1660.0,699.0" fill="none" stroke="#ff6600" stroke-width="1.2"/>
<polyline points="1000.0,647.1 1060.0,685.9 1120.0,689.5 1180.0,699.1 1240.0,634.5 1300.0,689.4 1360.0,675.6 1420.0,729.3 1480.0,699.1 1540.0,699.1 1600.0,699.1 1660.0,699.0" fill="none" stroke="#fccc00" stroke-width="1.2"/>
<polyline points="1000.0,586.0 1060.0,685.6 1120.0,688.3 1180.0,699.0 1240.0,634.4 1300.0,689.3 1360.0,675.0 1420.0,697.4 1480.0,699.0 1540.0,699.0 1600.0,699.0 1660.0,699.0" fill="none" stroke="#a6da0c" stroke-width="1.2"/>
<line x1="970" y1="699.5" x2="1690" y2="699.5" stroke="rgba(0,0,0,0.45)" stroke-width="1" stroke-dasharray="5,5"/>
<circle cx="1000.0" cy="637.8" r="4" fill="#ff6600"/>
<circle cx="1060.0" cy="698.6" r="4" fill="#ff6600"/>
<circle cx="1120.0" cy="697.8" r="4" fill="#ff6600"/>
<circle cx="1180.0" cy="698.9" r="4" fill="#ff6600"/>
<circle cx="1240.0" cy="698.9" r="4" fill="#ff6600"/>
<circle cx="1300.0" cy="698.9" r="4" fill="#ff6600"/>
<circle cx="1360.0" cy="698.4" r="4" fill="#ff6600"/>
<circle cx="1420.0" cy="667.0" r="4" fill="#ff6600"/>
<circle cx="1480.0" cy="698.9" r="4" fill="#ff6600"/>
<circle cx="1540.0" cy="698.9" r="4" fill="#ff6600"/>
<circle cx="1600.0" cy="698.9" r="4" fill="#ff6600"/>
<circle cx="1660.0" cy="699.0" r="4" fill="#ff6600"/>
<circle cx="1000.0" cy="647.1" r="4" fill="#fccc00"/>
<circle cx="1060.0" cy="685.9" r="4" fill="#fccc00"/>
<circle cx="1120.0" cy="689.5" r="4" fill="#fccc00"/>
<circle cx="1180.0" cy="699.1" r="4" fill="#fccc00"/>
<circle cx="1240.0" cy="634.5" r="4" fill="#fccc00"/>
<circle cx="1300.0" cy="689.4" r="4" fill="#fccc00"/>
<circle cx="1360.0" cy="675.6" r="4" fill="#fccc00"/>
<circle cx="1420.0" cy="729.3" r="4" fill="#fccc00"/>
<circle cx="1480.0" cy="699.1" r="4" fill="#fccc00"/>
<circle cx="1540.0" cy="699.1" r="4" fill="#fccc00"/>
<circle cx="1600.0" cy="699.1" r="4" fill="#fccc00"/>
<circle cx="1660.0" cy="699.0" r="4" fill="#fccc00"/>
<circle cx="1000.0" cy="586.0" r="4" fill="#a6da0c"/>
<circle cx="1060.0" cy="685.6" r="4" fill="#a6da0c"/>
<circle cx="1120.0" cy="688.3" r="4" fill="#a6da0c"/>
<circle cx="1180.0" cy="699.0" r="4" fill="#a6da0c"/>
<circle cx="1240.0" cy="634.4" r="4" fill="#a6da0c"/>
<circle cx="1300.0" cy="689.3" r="4" fill="#a6da0c"/>
<circle cx="1360.0" cy="675.0" r="4" fill="#a6da0c"/>
<circle cx="1420.0" cy="697.4" r="4" fill="#a6da0c"/>
<circle cx="1480.0" cy="699.0" r="4" fill="#a6da0c"/>
<circle cx="1540.0" cy="699.0" r="4" fill="#a6da0c"/>
<circle cx="1600.0" cy="699.0" r="4" fill="#a6da0c"/>
<circle cx="1660.0" cy="699.0" r="4" fill="#a6da0c"/>
</svg>
<div class="yl" style="left:858px;top:551.2px">25,000</div>
<div class="yl" style="left:858px;top:579.3px">20,000</div>
<div class="yl" style="left:858px;top:607.5px">15,000</div>
<div class="yl" style="left:858px;top:635.7px">10,000</div>
<div class="yl" style="left:858px;top:663.8px">5,000</div>
<div class="yl" style="left:858px;top:692.0px">0</div>
<div class="yl" style="left:858px;top:720.2px">-5,000</div>
<div class="yl" style="left:858px;top:748.3px">-10,000</div>
<div class="ml" style="left:950px">Enero</div>
<div class="ml" style="left:1010px">Febrero</div>
<div class="ml" style="left:1070px">Marzo</div>
<div class="ml" style="left:1130px">Abril</div>
<div class="ml" style="left:1190px">Mayo</div>
<div class="ml" style="left:1250px">Junio</div>
<div class="ml" style="left:1310px">Julio</div>
<div class="ml" style="left:1370px">Agosto</div>
<div class="ml" style="left:1430px">Septiembre</div>
<div class="ml" style="left:1490px">Octubre</div>
<div class="ml" style="left:1550px">Noviembre</div>
<div class="ml" style="left:1610px">Diciembre</div>
<div class="imp" style="left:899px;top:657px">Importe</div>
<div style="position:absolute;left:118px;top:520px;width:44px;height:23px;background:#fff"></div>
<div style="position:absolute;left:978px;top:520px;width:44px;height:23px;background:#fff"></div>
<div class="frameT"></div><div class="frameL"></div>
</div>
<div id="sb"><div id="sbt"></div><div id="sba"></div><div id="sbh"></div></div><div class="frameB"></div>
</body></html>
